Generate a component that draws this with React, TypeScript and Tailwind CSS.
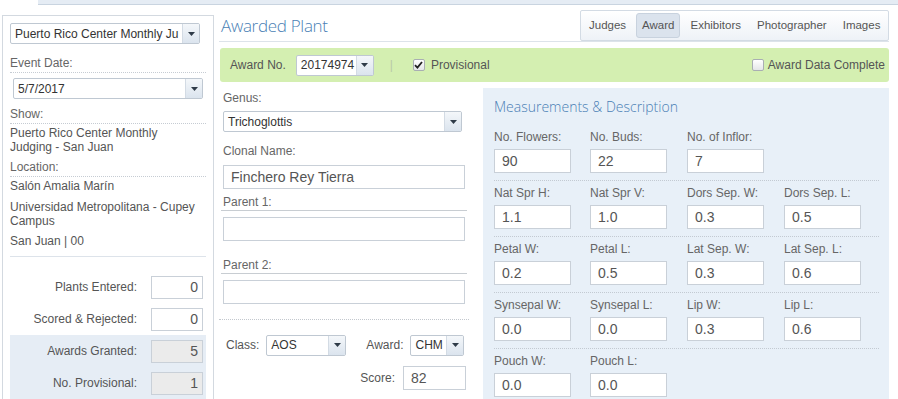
import React from "react";

const Arrow = () => (
  <svg width="7" height="4" viewBox="0 0 7 4"><path d="M0 0h7L3.5 4z" fill="#2f3b48" /></svg>
);

function Select({ value, className = "", text = "text-[12px]" }: { value: string; className?: string; text?: string }) {
  return (
    <div className={`flex h-[21px] border border-[#bfc8d2] rounded-[2px] bg-white overflow-hidden ${className}`}>
      <div className={`flex-1 min-w-0 px-[4px] flex items-center whitespace-nowrap overflow-hidden text-[#333] ${text}`}>{value}</div>
      <div className="w-[17px] shrink-0 border-l border-[#d3dbe4] bg-gradient-to-b from-[#f4f7fa] to-[#dbe4ee] flex items-center justify-center">
        <Arrow />
      </div>
    </div>
  );
}

function Check({ checked }: { checked?: boolean }) {
  return (
    <div className="w-[12px] h-[12px] border border-[#a9aeb3] rounded-[2px] bg-gradient-to-b from-white to-[#e4e6e8] flex items-center justify-center">
      {checked && (
        <svg width="9" height="8" viewBox="0 0 9 8"><path d="M1 4.2 3.4 6.6 8 1" stroke="#222" strokeWidth="1.8" fill="none" /></svg>
      )}
    </div>
  );
}

function Field({ label, value }: { label: string; value: string }) {
  return (
    <div>
      <div className="h-[14px] leading-[14px] text-[12px] text-[#666]">{label}</div>
      <div className="mt-[5px] w-[77px] h-[24px] border border-[#c9d0d8] bg-white pl-[7px] flex items-center text-[14px] text-[#555]">{value}</div>
    </div>
  );
}

function MRow({ items, first }: { items: [string, string][]; first?: boolean }) {
  return (
    <div className={`${first ? "pt-[14px]" : "pt-[5px]"} pb-[7px] border-b border-dotted border-[#c3cad2] grid grid-cols-[96px_97px_97px_97px]`}>
      {items.map(([l, v]) => (
        <Field key={l} label={l} value={v} />
      ))}
    </div>
  );
}

function StatRow({ label, value, band }: { label: string; value: string; band?: boolean }) {
  return (
    <div className={`h-[32px] flex items-center ${band ? "bg-[#e6edf5]" : ""}`}>
      <div className="w-[127px] text-right text-[12px] text-[#555]">{label}</div>
      <div className={`ml-[14px] w-[52px] h-[23px] border border-[#c9d0d8] ${band ? "bg-[#ebebeb]" : "bg-white"} flex items-center justify-end pr-[4px] text-[14px] text-[#555]`}>{value}</div>
    </div>
  );
}

export default function App() {
  const lbl = "h-[14px] leading-[14px] text-[12px] text-[#666]";
  return (
    <div className="w-[898px] h-[399px] overflow-hidden bg-white relative font-['Liberation_Sans',Arial,sans-serif] text-[12px] text-[#555]">
      <div className="h-[5px] ml-[38px] bg-[#e5ecf4] border-b border-[#c9d4e0]" />
      <div className="flex">
        {/* Left panel */}
        <div className="ml-[2px] mt-[10px] w-[212px] h-[400px] border border-[#d3d9e0] px-[7px] pt-[7px]">
          <Select value="Puerto Rico Center Monthly Ju" className="w-[190px]" />
          <div className={`mt-[12px] ${lbl} box-content pb-[2px] border-b border-dotted border-[#c6ccd3]`}>Event Date:</div>
          <Select value="5/7/2017" className="mt-[5px] ml-[3px] w-[190px]" />
          <div className={`mt-[8px] ${lbl} box-content pb-[2px] border-b border-dotted border-[#c6ccd3]`}>Show:</div>
          <div className="mt-[2px] leading-[14px] text-[12px] text-[#555]">Puerto Rico Center Monthly<br />Judging - San Juan</div>
          <div className={`mt-[6px] ${lbl} box-content pb-[2px] border-b border-dotted border-[#c6ccd3]`}>Location:</div>
          <div className="mt-[2px] leading-[14px] text-[12px] text-[#555]">Salón Amalia Marín</div>
          <div className="mt-[7px] leading-[14px] text-[12px] text-[#555]">Universidad Metropolitana - Cupey<br />Campus</div>
          <div className="mt-[6px] leading-[14px] text-[12px] text-[#555]">San Juan | 00</div>
          <div className="mt-[8px] border-t border-[#dde3ea]" />
          <div className="mt-[14px]">
            <StatRow label="Plants Entered:" value="0" />
            <StatRow label="Scored & Rejected:" value="0" />
            <StatRow label="Awards Granted:" value="5" band />
            <StatRow label="No. Provisional:" value="1" band />
          </div>
        </div>

        {/* Main */}
        <div className="ml-[5px] w-[670px]">
          <div className="mt-[5px] h-[32px] flex justify-between border-b border-[#dde3ea]">
            <div className="pl-[2px] self-center text-[17px] font-light text-[#4a7fb5] font-['Open_Sans',sans-serif] tracking-[-0.3px]">Awarded Plant</div>
            <div className="w-[309px] h-[31px] border border-[#d3dbe4] rounded-[2px] bg-gradient-to-b from-white to-[#eef2f7] flex items-center text-[11.5px] text-[#555]">
              {["Judges", "Award", "Exhibitors", "Photographer", "Images"].map((t) => (
                <div
                  key={t}
                  className={`mx-[2px] px-[5px] h-[25px] flex items-center rounded-[3px] ${t === "Award" ? "bg-[#dbe3ed] border border-[#c8d2de]" : "border border-transparent"}`}
                >
                  {t}
                </div>
              ))}
            </div>
          </div>

          <div className="mt-[6px] ml-[1px] h-[34px] rounded-[3px] bg-[#d4efb1] flex items-center pl-[10px] pr-[4px] text-[12px] text-[#555]">
            <span>Award No.</span>
            <Select value="20174974" className="ml-[10px] w-[78px]" />
            <span className="ml-[16px] text-[#b9c9a9]">|</span>
            <div className="ml-[20px]"><Check checked /></div>
            <span className="ml-[6px]">Provisional</span>
            <div className="ml-auto"><Check /></div>
            <span className="ml-[4px]">Award Data Complete</span>
          </div>

          <div className="mt-[6px] flex">
            {/* form column */}
            <div className="ml-[2px] w-[246px] pt-[3px]">
              <div className={`${lbl} pl-[2px]`}>Genus:</div>
              <Select value="Trichoglottis" className="mt-[6px] ml-[2px] w-[239px]" />
              <div className={`mt-[12px] ${lbl} pl-[2px]`}>Clonal Name:</div>
              <div className="mt-[7px] ml-[2px] w-[242px] h-[24px] border border-[#c9d0d8] bg-white pl-[7px] flex items-center text-[14px] text-[#555]">Finchero Rey Tierra</div>
              <div className={`mt-[6px] ${lbl} box-content pb-[1px] pl-[2px] border-b border-[#c8cdd2]`}>Parent 1:</div>
              <div className="mt-[6px] ml-[2px] w-[242px] h-[24px] border border-[#c9d0d8] bg-white" />
              <div className={`mt-[17px] ${lbl} box-content pb-[1px] pl-[2px] border-b border-[#c8cdd2]`}>Parent 2:</div>
              <div className="mt-[6px] ml-[2px] w-[242px] h-[24px] border border-[#c9d0d8] bg-white" />
              <div className="mt-[15px] -ml-[2px] w-[250px] border-t border-dotted border-[#c3c8ce]" />
              <div className="mt-[14px] flex items-center h-[22px]">
                <span className="ml-[5px] text-[12px] text-[#555]">Class:</span>
                <Select value="AOS" className="ml-[7px] w-[80px]" />
                <span className="ml-[20px] text-[12px] text-[#555]">Award:</span>
                <Select value="CHM" className="ml-[7px] w-[54px]" />
              </div>
              <div className="mt-[10px] flex items-center justify-end pr-[1px]">
                <span className="text-[12px] text-[#555]">Score:</span>
                <div className="ml-[8px] w-[63px] h-[24px] border border-[#c9d0d8] bg-white pl-[7px] flex items-center text-[14px] text-[#555]">82</div>
              </div>
            </div>

            {/* measurements */}
            <div className="ml-[16px] w-[406px] h-[320px] bg-[#e8f0f8] pl-[11px] pr-[10px] pt-[10px]">
              <div className="h-[18px] leading-[18px] text-[14px] font-light text-[#4a7fb5] font-['Open_Sans',sans-serif]">Measurements &amp; Description</div>
              <MRow first items={[["No. Flowers:", "90"], ["No. Buds:", "22"], ["No. of Inflor:", "7"]]} />
              <MRow items={[["Nat Spr H:", "1.1"], ["Nat Spr V:", "1.0"], ["Dors Sep. W:", "0.3"], ["Dors Sep. L:", "0.5"]]} />
              <MRow items={[["Petal W:", "0.2"], ["Petal L:", "0.5"], ["Lat Sep. W:", "0.3"], ["Lat Sep. L:", "0.6"]]} />
              <MRow items={[["Synsepal W:", "0.0"], ["Synsepal L:", "0.0"], ["Lip W:", "0.3"], ["Lip L:", "0.6"]]} />
              <MRow items={[["Pouch W:", "0.0"], ["Pouch L:", "0.0"]]} />
            </div>
          </div>
        </div>
      </div>
    </div>
  );
}
